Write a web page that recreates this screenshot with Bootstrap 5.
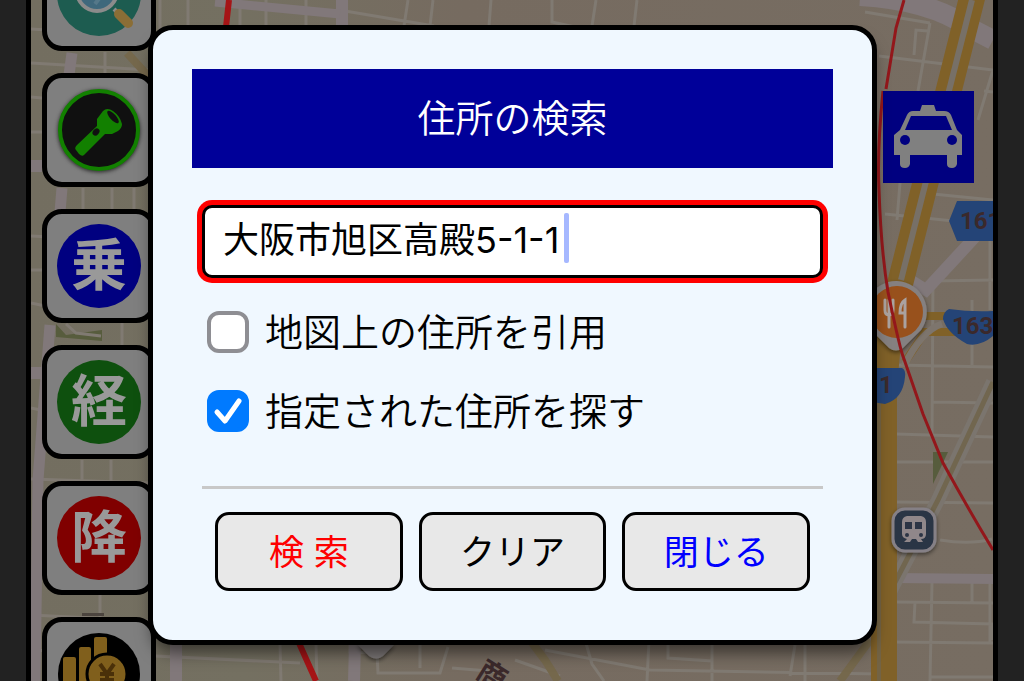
<!DOCTYPE html>
<html lang="ja">
<head>
<meta charset="utf-8">
<meta name="viewport" content="width=device-width, initial-scale=1">
<title>住所の検索</title>
<link href="https://cdn.jsdelivr.net/npm/bootstrap@5.3.0/dist/css/bootstrap.min.css" rel="stylesheet">
<style>
  body { background: #222; font-family: Inter, "Noto Sans CJK JP", sans-serif; color: #000; }
  .frame { min-height: 100vh; margin: 0 26px; border: solid #000; border-width: 0 5px; background: #766d61; }
  .map-art { inset: 0; }
  .tools { top: -63px; left: 11px; gap: 22px; }
  .tool { width: 114px; height: 114px; padding: 0; border: 5px solid #000; border-radius: 20px; background: #7f7f7f; }
  .tool svg { width: 84px; height: 84px; }
  .kanji { width: 84px; height: 84px; font-size: 56px; line-height: 82px; font-weight: 700; color: #999; }
  .k-ride { background: #000080; }
  .k-via { background: #0e500e; }
  .k-off { background: #800000; }
  .stage { padding: 25px 116px 36px 117px; }
  .search-box { border: 5px solid #000; border-radius: 25px; background: #f0f8ff; padding: 39px 39px 49px; box-shadow: 0 12px 16px -4px rgba(0,0,0,.5); }
  .title-bar { background: #000099; color: #fff; font-size: 38px; line-height: 99px; font-weight: 350; }
  .fields { padding: 37px 10px 0; }
  .addr, .addr:focus { height: 73px; padding: 0 18px 10px; border: 3px solid #000; border-radius: 10px; background: #fff; color: #000; font-size: 36px; line-height: 56px; box-shadow: 0 0 0 5px #f00; }
  .caret { left: 362px; top: 8px; width: 5px; height: 50px; border-radius: 2px; background: #a6b8ff; }
  .choices { padding: 30px 5px 0; gap: 31px; }
  .choice { gap: 16px; font-size: 38px; line-height: 48px; font-weight: 350; }
  .choice .form-check-input { width: 42px; height: 42px; margin: 0; border: 4px solid #8e8e93; border-radius: 12px; background-color: #fff; }
  .choice .form-check-input:checked { border-color: #007aff; background-color: #007aff; background-origin: border-box; background-size: 42px 42px;
    background-image: url("data:image/svg+xml,%3csvg xmlns='http://www.w3.org/2000/svg' viewBox='0 0 42 42'%3e%3cpath d='M10 22L18 31L32 11' fill='none' stroke='%23fff' stroke-width='5' stroke-linecap='round' stroke-linejoin='round'/%3e%3c/svg%3e"); }
  .rule { height: 3px; margin: 51px 0 23px; border: 0; background: #c8c8c8; opacity: 1; }
  .actions { padding: 0 13px; gap: 16px; }
  .act { flex: 1 1 0; height: 79px; padding: 0; border: 3px solid #000; border-radius: 14px; background: #e8e8e8; font-size: 35px; line-height: 52px; color: #000; }
  .act-go { color: #f00; }
  .act-close { color: #00f; }
</style>
</head>
<body>
<div class="frame position-relative overflow-hidden">
  <svg class="map-art position-absolute w-100 h-100" viewBox="31 0 962 681" preserveAspectRatio="xMidYMid slice" aria-hidden="true">
    <defs>
      <linearGradient id="land" x1="0" x2="1" y1="0" y2="0"><stop offset="0" stop-color="#736e60"/><stop offset=".22" stop-color="#747061"/><stop offset=".45" stop-color="#766b60"/><stop offset="1" stop-color="#776d62"/></linearGradient>
      <filter id="soft" x="-30%" y="-30%" width="160%" height="160%"><feDropShadow dx="0" dy="2" stdDeviation="2" flood-opacity=".5"/></filter>
    </defs>
    <path fill="url(#land)" d="M31 0H993V681H31z"/>
    <g fill="none" stroke="#807a72" stroke-width="3">
      <path d="M31 29L160 37M31 63L150 70M31 97L150 108M31 132H50M31 165L50 166M31 236L50 237M31 270H50M31 303L50 307M31 408L50 412M31 479L150 483M31 615L152 621M31 650L300 663"/>
      <path d="M54 0V20M105 52V75M83 188V212M112 188V212M134 188V212M122 323V348M82 460V482M111 460V482M100 594V618M160 0V30M188 0V26M240 0V27M266 0V27M306 0V27"/>
      <path d="M240 3L345 13L340 25M345 11L434 26M408 0L404 26M433 0L430 26M491 0L489 26M552 0V22L575 27M596 0L592 26M637 0L634 26"/>
      <path d="M280 644L281 681M316 644L317 681M350 644V652L377 653L378 673H440L448 647M420 640V668M452 668L500 672M515 660L560 676M545 650L650 670L880 674M585 640L592 664L604 681M649 640L647 681M668 640V658L712 661V681M712 640V681M795 645L790 676M805 645V681"/>
      <path d="M865 12L930 23M930 23L918 91M879 56L993 70M914 55L916 30L928 31M993 70L978 120M984 91L993 92M885 214L993 225M933 194L993 200M900 183L897 220M895 365L993 367M933 276L932 437M932 281L993 280M990 240V310M972 300V365M933 402L993 403M896 434L993 437M896 462L993 462M896 502L993 503M940 540Q970 545 992 539M896 602L993 603M932 582L930 681M972 582V602M915 602L914 622L993 624V640M892 642L993 643M930 677H993M990 582V642"/>
    </g>
    <g fill="none" stroke="#81787a">
      <path d="M72 53L69 75M62 188L60 212M50 325L38 480L35 681" stroke-width="11"/>
      <path d="M342 0V27M355 644L354 681M176 640V681M31 166H42M31 373H42" stroke-width="12"/>
      <path d="M215 2L340 14" stroke-width="9"/>
      <path d="M860 -4Q930 0 970 28L993 40" stroke-width="20"/>
      <path d="M975 237L926 290L910 280" stroke-width="12"/>
      <path d="M896 578L993 579" stroke-width="10"/>
    </g>
    <path d="M127 53L150 78M530 640L545 660L558 681M870 640L840 681" fill="none" stroke="#75684c" stroke-width="8"/>
    <path d="M993 382L938 500L870 630" fill="none" stroke="#7b756e" stroke-width="14"/>
    <path d="M993 382L938 500L870 630" fill="none" stroke="#71664f" stroke-width="5"/>
    <path d="M56 324L66 335L102 330V341L56 337zM933 452H948L933 484z" fill="#575c3d"/>
    <path d="M66 324L76 333L101 336" fill="none" stroke="#807a72" stroke-width="3"/>
    <path d="M82 613H104V616H82z" fill="#4c453f"/>
    <path d="M974 -10L901 280Q886 330 884 400V681" fill="none" stroke="#806128" stroke-width="26"/>
    <path d="M972 0L901 280" fill="none" stroke="#777067" stroke-width="6"/>
    <path d="M879 370V681" fill="none" stroke="#736344" stroke-width="4"/>
    <path d="M925 316H960M905 362L925 332H960" fill="none" stroke="#806128" stroke-width="8"/>
    <path d="M904 366Q922 330 942 324" fill="none" stroke="#7d756d" stroke-width="7"/>
    <g filter="url(#soft)">
      <path d="M897 281a31 31 0 0 1 24 49L903 348q-7 5-14 0L871 330a31 31 0 0 1 26-49z" fill="#858080"/>
      <circle cx="897" cy="312" r="26" fill="#98511a"/>
    </g>
    <path d="M885 300V310Q885 315 889 315V327M889 300V315M893 300V310Q893 315 889 315M905 327V300Q900 303 900 313H905" fill="none" stroke="#aaa2a0" stroke-width="3" stroke-linecap="round"/>
    <g fill="#244477">
      <path d="M957 201H993V241H957L949 221z"/>
      <path d="M949 309Q970 312 993 311V336Q980 347 967 344Q947 333 943 319Q943 312 949 309z"/>
      <path d="M872 368H902Q906 370 905 377Q903 399 885 404L872 402z"/>
    </g>
    <g fill="#3b292b" font-family="Roboto, sans-serif" font-weight="700" font-size="24">
      <text x="960" y="229">161</text><text x="952" y="334">163</text><text x="879" y="393">1</text>
    </g>
    <path d="M904 0L896 28L886 89M883 91Q877 150 879 190Q881 250 888 292Q900 350 904 359L923 414L943 463Q970 512 993 550" fill="none" stroke="#93171b" stroke-width="3"/>
    <path d="M229 0L226 27M299 643L316 681" fill="none" stroke="#a51416" stroke-width="6"/>
    <path d="M357 644H395L383 656Q376 661 369 656z" fill="#7c7777" filter="url(#soft)"/>
    <text x="476" y="679" font-size="29" font-weight="700" fill="#3b292b" transform="rotate(32 480 675)">商</text>
    <g filter="url(#soft)"><rect x="893" y="509" width="42" height="42" rx="12" fill="#2c3445" stroke="#858086" stroke-width="3"/></g>
    <path d="M907 516H921Q926 517 926 522V534Q926 539 921 539L923 542H918L916 539H912L910 542H904L907 539Q902 538 902 534V522Q902 517 907 516z" fill="#90878a"/>
    <path d="M905 522H912V529H905zM915 522H922V529H915z" fill="#2c3445"/><circle cx="907" cy="535" r="2" fill="#2c3445"/><circle cx="921" cy="535" r="2" fill="#2c3445"/>
    <path d="M883 91H974V183H883z" fill="#000080"/>
    <path d="M922 105H934L936 111H944Q949 111 951 115L957 130L962 135V155H957V164Q956 168 952 168Q947 168 947 164V155H910V164Q909 168 905 168Q900 168 900 164V155H894V135L900 130L907 115Q909 111 913 111H920z" fill="#808080"/>
    <path d="M911 116H946L952 130H905z" fill="#000080"/><circle cx="905" cy="140" r="5" fill="#000080"/><circle cx="952" cy="140" r="5" fill="#000080"/>
  </svg>

  <nav class="tools position-absolute d-flex flex-column" aria-label="ツール">
    <button class="tool d-flex align-items-center justify-content-center" type="button" aria-label="虫眼鏡">
      <svg viewBox="0 0 84 84"><circle cx="42" cy="42" r="42" fill="#1d5c50"/><path d="M57 57L62 62" stroke="#8b8b8b" stroke-width="4"/><path d="M62 62L71 71" stroke="#8b6e36" stroke-width="10" stroke-linecap="round"/><circle cx="40" cy="39" r="20" fill="#3f687c" stroke="#8b8b8b" stroke-width="4"/><path d="M33 47L40 38M38 52L50 36" stroke="#557889" stroke-width="4"/></svg>
    </button>
    <button class="tool d-flex align-items-center justify-content-center" type="button" aria-label="ライト">
      <svg viewBox="0 0 84 84" overflow="visible"><circle cx="42" cy="42" r="39" fill="#101010" stroke="#128000" stroke-width="4" style="filter:drop-shadow(0 1px 2px #222)"/><path d="M40 31L46 23Q50 19 56 23Q63 28 65 36Q65 40 61 43L55 46H48L27 67Q25 69 22 66L19 62Q17 60 20 57L40 38z" fill="#128000"/><ellipse cx="56" cy="29" rx="3" ry="8" transform="rotate(-42 56 29)" fill="#101010"/><ellipse cx="39" cy="44" rx="3" ry="4" transform="rotate(40 39 44)" fill="#101010"/></svg>
    </button>
    <button class="tool d-flex align-items-center justify-content-center" type="button"><span class="kanji k-ride rounded-circle">乗</span></button>
    <button class="tool d-flex align-items-center justify-content-center" type="button"><span class="kanji k-via rounded-circle">経</span></button>
    <button class="tool d-flex align-items-center justify-content-center" type="button"><span class="kanji k-off rounded-circle">降</span></button>
    <button class="tool d-flex align-items-center justify-content-center" type="button" aria-label="料金">
      <svg viewBox="0 0 84 84"><circle cx="42" cy="42" r="41" fill="#000"/><g fill="#805f1c"><rect x="6" y="25" width="13" height="50" rx="2"/><rect x="22" y="15" width="12" height="60" rx="2"/><rect x="37" y="5" width="13" height="60" rx="2"/></g><circle cx="50" cy="42" r="20" fill="#805f1c" stroke="#000" stroke-width="3"/><path d="M43 32L50 42L57 32M50 42V54M43 42H57M43 48H57" fill="none" stroke="#4a3009" stroke-width="4"/></svg>
    </button>
  </nav>

  <main class="stage position-relative">
    <form class="search-box" onsubmit="return false">
      <h1 class="title-bar text-center m-0">住所の検索</h1>
      <div class="fields">
        <div class="position-relative">
          <input class="addr form-control" type="text" value="大阪市旭区高殿5-1-1" aria-label="住所">
          <span class="caret position-absolute"></span>
        </div>
        <div class="choices d-flex flex-column">
          <div class="choice d-flex align-items-center">
            <input class="form-check-input" type="checkbox" id="quote"><label for="quote">地図上の住所を引用</label>
          </div>
          <div class="choice d-flex align-items-center">
            <input class="form-check-input" type="checkbox" id="find" checked><label for="find">指定された住所を探す</label>
          </div>
        </div>
        <hr class="rule">
        <div class="actions d-flex">
          <button class="act act-go btn" type="submit">検 索</button>
          <button class="act btn" type="reset">クリア</button>
          <button class="act act-close btn" type="button">閉じる</button>
        </div>
      </div>
    </form>
  </main>
</div>
<script src="https://cdn.jsdelivr.net/npm/bootstrap@5.3.0/dist/js/bootstrap.bundle.min.js"></script>
</body>
</html>
